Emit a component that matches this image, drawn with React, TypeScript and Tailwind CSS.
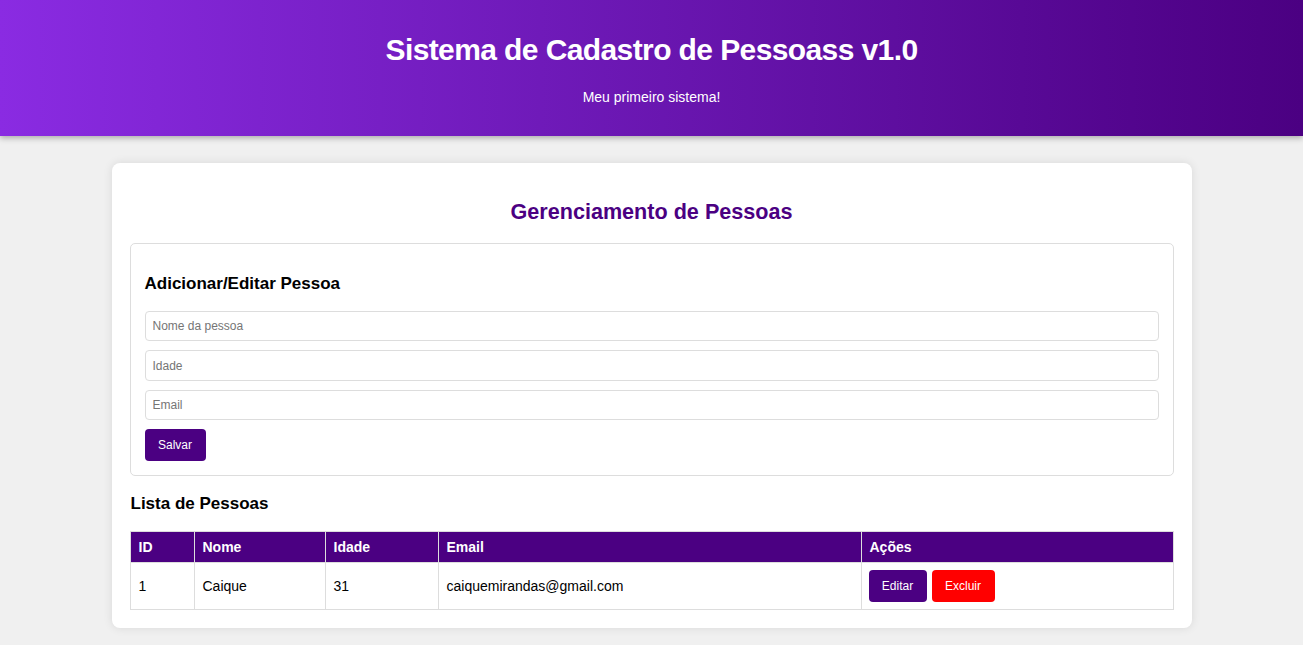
import React from "react";

const people = [{ id: 1, nome: "Caique", idade: 31, email: "caiquemirandas@gmail.com" }];

export default function App() {
  return (
    <div className="min-h-screen bg-[#f0f0f0] font-['Liberation_Sans',Arial,sans-serif] text-black">
      {/* Header */}
      <header className="h-[136px] bg-gradient-to-r from-[#8a2be2] to-[#4b0082] text-white text-center shadow-[0_2px_6px_rgba(0,0,0,0.3)] pt-[33px]">
        <h1 className="text-[30px] font-bold leading-[34px] tracking-[-0.6px]">
          Sistema de Cadastro de Pessoass v1.0
        </h1>
        <p className="mt-[21px] text-[14px] leading-[18px]">Meu primeiro sistema!</p>
      </header>

      {/* Main card */}
      <main className="w-[1080px] mx-auto mt-[27px] bg-white rounded-lg shadow-[0_0_10px_rgba(0,0,0,0.1)] px-[18px] pt-[36px] pb-[18px]">
        <h2 className="text-center text-[21.6px] font-bold text-[#4b0082] leading-[26px]">
          Gerenciamento de Pessoas
        </h2>

        {/* Form */}
        <section className="mt-[18px] border border-[#ddd] rounded-[5px] px-[14px] pt-[30px] pb-[14px]">
          <h3 className="text-[17px] font-bold leading-[20px]">Adicionar/Editar Pessoa</h3>
          <div className="mt-[17px] flex flex-col gap-[9px]">
            <input
              placeholder="Nome da pessoa"
              className="h-[30px] border border-[#ddd] rounded-[4px] px-[7px] text-[12px] placeholder:text-[#757575] outline-none"
            />
            <input
              placeholder="Idade"
              className="h-[31px] border border-[#ddd] rounded-[4px] px-[7px] text-[12px] placeholder:text-[#757575] outline-none"
            />
            <input
              placeholder="Email"
              className="h-[30px] border border-[#ddd] rounded-[4px] px-[7px] text-[12px] placeholder:text-[#757575] outline-none"
            />
            <div>
              <button className="h-[32px] w-[61px] bg-[#4b0082] text-white text-[12px] rounded-[4px]">
                Salvar
              </button>
            </div>
          </div>
        </section>

        {/* List */}
        <h3 className="mt-[18px] ml-px text-[17px] font-bold leading-[20px]">Lista de Pessoas</h3>
        <table className="mt-[17px] w-full border-collapse text-[14px]">
          <thead>
            <tr className="bg-[#4b0082] text-white font-bold h-[31px]">
              <th className="w-[64px] border border-[#ddd] px-[8px] text-left">ID</th>
              <th className="w-[131px] border border-[#ddd] px-[8px] text-left">Nome</th>
              <th className="w-[113px] border border-[#ddd] px-[8px] text-left">Idade</th>
              <th className="w-[423px] border border-[#ddd] px-[8px] text-left">Email</th>
              <th className="border border-[#ddd] px-[8px] text-left">Ações</th>
            </tr>
          </thead>
          <tbody>
            {people.map((p) => (
              <tr key={p.id} className="h-[47px]">
                <td className="border border-[#ddd] px-[8px]">{p.id}</td>
                <td className="border border-[#ddd] px-[8px]">{p.nome}</td>
                <td className="border border-[#ddd] px-[8px]">{p.idade}</td>
                <td className="border border-[#ddd] px-[8px]">{p.email}</td>
                <td className="border border-[#ddd] px-[7px]">
                  <div className="flex gap-[5px]">
                    <button className="h-[32px] w-[58px] bg-[#4b0082] text-white text-[12px] rounded-[4px]">
                      Editar
                    </button>
                    <button className="h-[32px] w-[63px] bg-[#ff0000] text-white text-[12px] rounded-[4px]">
                      Excluir
                    </button>
                  </div>
                </td>
              </tr>
            ))}
          </tbody>
        </table>
      </main>
    </div>
  );
}
